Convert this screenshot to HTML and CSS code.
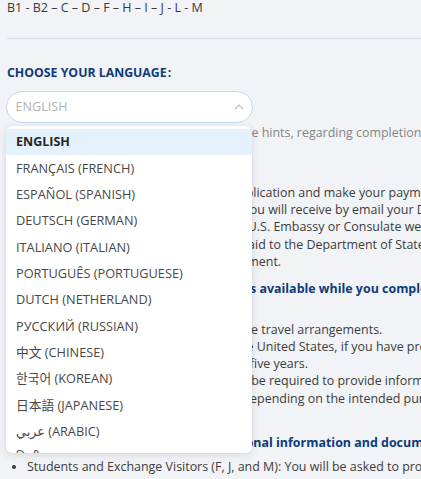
FILE: index.html
```html
<!DOCTYPE html>
<html lang="en">
<head>
<meta charset="utf-8">
<title>Visa application – language</title>
<link rel="stylesheet" href="styles.css">
</head>
<body>
<div class="page">
  <p class="visa-classes">B1 - B2 – C – D – F – H – I – J - L - M</p>
  <hr class="divider">
  <h2 class="lang-title">CHOOSE YOUR LANGUAGE&#8202;:</h2>
  <div class="lang-picker">
    <div class="lang-select">
      <span class="lang-value">ENGLISH</span>
      <svg class="chevron" width="10" height="6" viewBox="0 0 10 6"><path d="M1 5.2 L5 1 L9 5.2"/></svg>
    </div>
    <ul class="lang-menu">
      <li class="lang-option is-active">ENGLISH</li>
      <li class="lang-option">FRANÇAIS (FRENCH)</li>
      <li class="lang-option">ESPAÑOL (SPANISH)</li>
      <li class="lang-option">DEUTSCH (GERMAN)</li>
      <li class="lang-option">ITALIANO (ITALIAN)</li>
      <li class="lang-option">PORTUGUÊS (PORTUGUESE)</li>
      <li class="lang-option">DUTCH (NETHERLAND)</li>
      <li class="lang-option">РУССКИЙ (RUSSIAN)</li>
      <li class="lang-option">中文 (CHINESE)</li>
      <li class="lang-option">한국어 (KOREAN)</li>
      <li class="lang-option">日本語 (JAPANESE)</li>
      <li class="lang-option">عربي (ARABIC)</li>
      <li class="lang-option">हिन्दी (HINDI)</li>
    </ul>
  </div>

  <p class="hint"><span class="line">Please hover over all of the fields to see the hints, regarding completion of the form.</span></p>

  <p class="text">
    <span class="line">First, complete the on-line DS-160 visa application and make your payment online.</span>
    <span class="line">Once your payment has been confirmed you will receive by email your DS-160 confirmation</span>
    <span class="line">confirmation page, and directions for the U.S. Embassy or Consulate website.</span>
    <span class="line">to book your interview. The fee must be paid to the Department of State</span>
    <span class="line">before you schedule an interview appointment.</span>
  </p>

  <h3 class="section-title"><span class="line">Please have all the following documents available while you complete the application:</span></h3>

  <ul class="doc-list">
    <li><span class="line">Passport</span></li>
    <li><span class="line">A travel itinerary if you have booked the travel arrangements.</span></li>
    <li><span class="line">Dates of your last 5 visits or trips to the United States, if you have previously traveled</span>
        <span class="line">international travel history for the last five years.</span></li>
    <li><span class="line">Depending on your visa type, you may be required to provide information about</span>
        <span class="line">your prior education and job history, depending on the intended purpose of your travel.</span></li>
  </ul>

  <h3 class="section-title title-2"><span class="line">Some applicants will have to list additional information and documents:</span></h3>

  <ul class="doc-list list-2">
    <li><span class="line">Students and Exchange Visitors (F, J, and M): You will be asked to provide your SEVIS ID.</span></li>
  </ul>
</div>
</body>
</html>
```

FILE: styles.css
```css
html, body {
  margin: 0;
  padding: 0;
}

body {
  background: #f2f3f6;
  font-family: "Open Sans", "Noto Sans", "DejaVu Sans", "Noto Sans CJK SC", sans-serif;
  color: #3c3c3c;
  font-size: 12.45px;
  overflow: hidden;
  width: 421px;
  height: 479px;
}

.page {
  padding-left: 7px;
  width: 900px;
}

.line {
  display: block;
  white-space: nowrap;
}

.visa-classes {
  margin: 0;
  font-size: 12.5px;
  line-height: 16px;
  color: #3a3a3a;
}

.divider {
  margin: 22px 0 0 0;
  border: 0;
  border-top: 1.5px solid #dcdee5;
  height: 0;
}

.lang-title {
  margin: 25.6px 0 0 0;
  font-size: 12.3px;
  line-height: 16px;
  font-weight: 700;
  color: #0d3b7b;
}

.lang-picker {
  position: relative;
  margin: 10px 0 0 -1px;
  width: 247px;
}

.lang-select {
  box-sizing: border-box;
  height: 32px;
  border: 1.5px solid #c3d8f5;
  border-radius: 16px;
  background: #ffffff;
  padding: 0 8.5px;
  display: flex;
  align-items: center;
  justify-content: space-between;
}

.lang-value {
  font-size: 12.6px;
  color: #b3b3b3;
}

.chevron {
  fill: none;
  stroke: #b8b8b8;
  stroke-width: 1.1;
}

.lang-menu {
  position: absolute;
  z-index: 5;
  top: calc(100% + 3px);
  left: 0;
  width: 246px;
  height: 327px;
  margin: 0;
  padding: 3px 0 0 0;
  box-sizing: border-box;
  list-style: none;
  background: #ffffff;
  border-radius: 6px;
  overflow: hidden;
  box-shadow: 0 2px 8px rgba(40, 50, 70, 0.13), 0 0 1px rgba(40, 50, 70, 0.15);
}

.lang-option {
  height: 26.3px;
  line-height: 26.3px;
  padding-left: 10px;
  font-size: 12.75px;
  color: #474747;
  white-space: nowrap;
}

.lang-option.is-active {
  background: #e3f2fc;
  font-weight: 700;
  color: #262626;
  font-size: 12.5px;
}

.hint {
  margin: 1.4px 0 0 0;
  line-height: 17.2px;
  color: #858585;
}

.text {
  margin: 42.8px 0 0 0;
  line-height: 17.2px;
}

.section-title {
  margin: 9.5px 0 0 0;
  font-size: 12.45px;
  line-height: 17.2px;
  font-weight: 700;
  color: #0d3b7b;
}

.doc-list {
  margin: 6.9px 0 0 0;
  padding-left: 20px;
  line-height: 17.2px;
}

.title-2 {
  margin-top: 27.2px;
}

.list-2 {
  margin-top: 6.3px;
}
```
